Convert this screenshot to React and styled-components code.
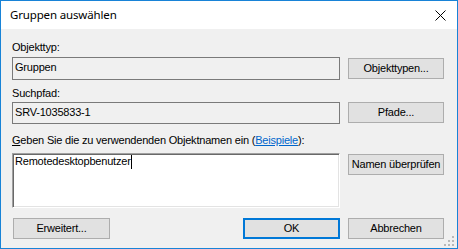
import React from "react";
import styled, { createGlobalStyle } from "styled-components";

const GlobalStyle = createGlobalStyle`
  html, body {
    margin: 0;
    padding: 0;
    background: #ffffff;
  }
`;

const Window = styled.div`
  position: relative;
  box-sizing: border-box;
  width: 458px;
  height: 249px;
  border: 1px solid #1883d7;
  background: #f0f0f0;
  display: flex;
  flex-direction: column;
  font-family: "Liberation Sans", Arial, sans-serif;
  font-size: 11px;
  letter-spacing: -0.2px;
  color: #000;
`;

const TitleBar = styled.div`
  height: 28px;
  background: #fff;
  display: flex;
  align-items: center;
  justify-content: space-between;
  padding: 0 11px 0 9px;
`;

const Title = styled.span`
  font-family: "Noto Sans", "Open Sans", sans-serif;
  font-size: 11.5px;
  letter-spacing: -0.15px;
  margin-top: -1px;
`;

const CloseIcon = styled.svg`
  display: block;
`;

const Client = styled.div`
  flex: 1;
  padding: 12px 12px 0 11px;
  display: flex;
  flex-direction: column;
`;

const Label = styled.div`
  line-height: 13px;
  height: 13px;
  margin-top: ${(p) => p.$top || 0}px;
  margin-bottom: ${(p) => p.$bottom || 0}px;
  white-space: nowrap;
`;

const Row = styled.div`
  display: grid;
  grid-template-columns: 328px 96px;
  column-gap: 8px;
  align-items: start;
`;

const ReadBox = styled.div`
  box-sizing: border-box;
  height: ${(p) => p.$h}px;
  border: 1px solid #7a7a7a;
  background: #f0f0f0;
  padding: 3px 2px;
  line-height: 13px;
`;

const NameArea = styled.div`
  box-sizing: border-box;
  height: 55px;
  background: #fff;
  border: 1px solid;
  border-color: #a0a0a0 #ffffff #ffffff #a0a0a0;
  box-shadow: inset 1px 1px 0 #696969, inset -1px -1px 0 #e3e3e3;
  padding: 1px 2px;
  line-height: 13px;
  display: flex;
  align-items: flex-start;
`;

const Caret = styled.span`
  display: inline-block;
  width: 1px;
  height: 14px;
  background: #000;
`;

const Button = styled.button`
  box-sizing: border-box;
  width: ${(p) => p.$w || 96}px;
  height: 21px;
  margin-top: ${(p) => p.$top || 0}px;
  padding: 0;
  background: #e1e1e1;
  border: ${(p) => (p.$default ? "2px solid #0078d7" : "1px solid #adadad")};
  font-family: "Liberation Sans", Arial, sans-serif;
  font-size: 11px;
  letter-spacing: -0.2px;
  color: #000;
  line-height: 13px;
  text-align: center;
`;

const Mnemonic = styled.span`
  text-decoration: underline;
`;

const Link = styled.span`
  color: #0066cc;
  text-decoration: underline;
`;

const BottomRow = styled(Row)`
  margin-top: 10px;
`;

const BottomLeft = styled.div`
  display: flex;
  justify-content: space-between;
  padding-left: 1px;
`;

const Grip = styled.svg`
  position: absolute;
  right: 3px;
  bottom: 2px;
`;

export default function App() {
  return (
    <>
      <GlobalStyle />
      <Window>
        <TitleBar>
          <Title>Gruppen auswählen</Title>
          <CloseIcon width="11" height="11" viewBox="0 0 11 11">
            <path d="M0.5 0.5 L10.5 10.5 M10.5 0.5 L0.5 10.5" stroke="#000" strokeWidth="1" />
          </CloseIcon>
        </TitleBar>
        <Client>
          <Label $bottom={3}>Objekttyp:</Label>
          <Row>
            <ReadBox $h={23}>Gruppen</ReadBox>
            <Button $top={1}>Objekttypen...</Button>
          </Row>
          <Label $top={7} $bottom={2}>Suchpfad:</Label>
          <Row>
            <ReadBox $h={22}>SRV-1035833-1</ReadBox>
            <Button>Pfade...</Button>
          </Row>
          <Label $top={10} $bottom={6}>
            <Mnemonic>G</Mnemonic>eben Sie die zu verwendenden Objektnamen ein (<Link>Beispiele</Link>):
          </Label>
          <Row>
            <NameArea>
              <span>Remotedesktopbenutzer</span>
              <Caret />
            </NameArea>
            <Button $top={1}>Namen überprüfen</Button>
          </Row>
          <BottomRow>
            <BottomLeft>
              <Button $w={97}>Erweitert...</Button>
              <Button $w={97} $default>OK</Button>
            </BottomLeft>
            <Button>Abbrechen</Button>
          </BottomRow>
        </Client>
        <Grip width="10" height="10" viewBox="0 0 10 10">
          <g fill="#b8b8b8">
            <rect x="8" y="0" width="2" height="2" />
            <rect x="4" y="4" width="2" height="2" />
            <rect x="8" y="4" width="2" height="2" />
            <rect x="0" y="8" width="2" height="2" />
            <rect x="4" y="8" width="2" height="2" />
            <rect x="8" y="8" width="2" height="2" />
          </g>
        </Grip>
      </Window>
    </>
  );
}
